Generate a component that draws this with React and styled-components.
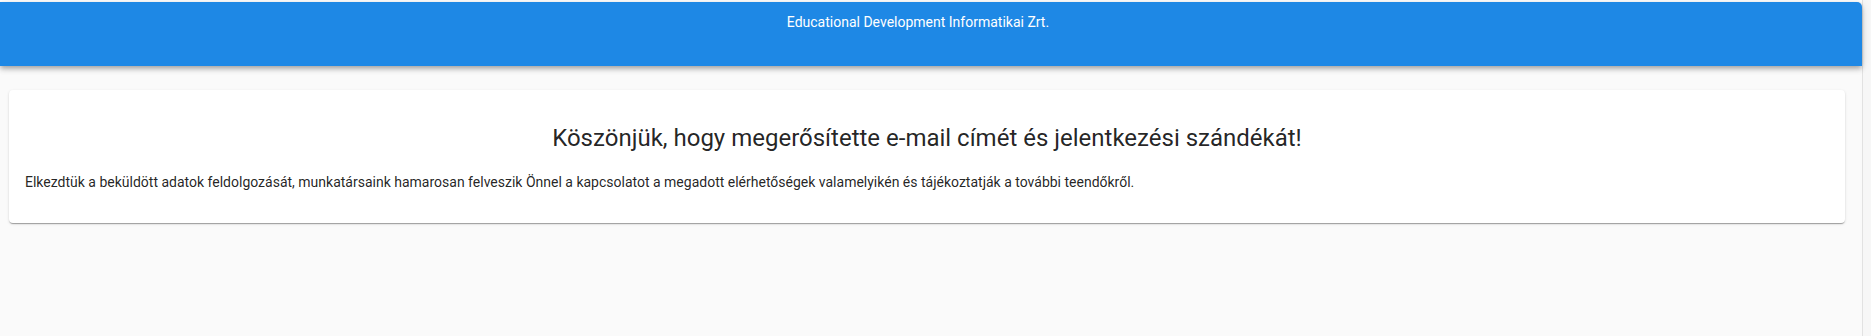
import styled, { createGlobalStyle } from "styled-components";

const GlobalStyle = createGlobalStyle`
    html, body {
        margin: 0;
        padding: 0;
        height: 100%;
        background: #fafafa;
        font-family: Roboto, "Liberation Sans", sans-serif;
        overflow: hidden;
    }
`;

const App = () => {
    return (
        <Page>
            <GlobalStyle />
            <Main>
                <Header>
                    <HeaderTitle>Educational Development Informatikai Zrt.</HeaderTitle>
                </Header>

                <Content>
                    <Card>
                        <Title>Köszönjük, hogy megerősítette e-mail címét és jelentkezési szándékát!</Title>
                        <Text>
                            Elkezdtük a beküldött adatok feldolgozását, munkatársaink hamarosan felveszik Önnel a kapcsolatot a megadott elérhetőségek valamelyikén és tájékoztatják a további teendőkről.
                        </Text>
                    </Card>
                </Content>
            </Main>
            <ScrollTrack />
        </Page>
    );
}

const Page = styled.div`
    display: flex;
    min-height: 100vh;
    background: #fafafa;
`;

const Main = styled.div`
    flex: 1;
    display: flex;
    flex-direction: column;
    padding-top: 2px;
    background: linear-gradient(#ffffff 0 2px, #fafafa 2px);
`;

const Header = styled.header`
    height: 64px;
    box-sizing: border-box;
    padding: 10px 26px 0 0;
    background: #1e88e5;
    border-top-right-radius: 5px;
    box-shadow: 0 2px 4px -1px rgba(0, 0, 0, 0.2), 0 4px 5px 0 rgba(0, 0, 0, 0.14), 0 1px 10px 0 rgba(0, 0, 0, 0.12);
    position: relative;
    z-index: 2;
    text-align: center;
`;

const HeaderTitle = styled.span`
    color: #ffffff;
    font-size: 14px;
    line-height: 20px;
`;

const Content = styled.div`
    padding: 24px 17px 0 9px;
`;

const Card = styled.div`
    background: #ffffff;
    border-radius: 4px;
    padding: 16px;
    box-shadow: 0 2px 1px -1px rgba(0, 0, 0, 0.2), 0 1px 1px 0 rgba(0, 0, 0, 0.14), 0 1px 3px 0 rgba(0, 0, 0, 0.12);
`;

const Title = styled.h2`
    margin: 16px 0 0;
    font-size: 24px;
    line-height: 32px;
    font-weight: 400;
    text-align: center;
    color: rgba(0, 0, 0, 0.87);
`;

const Text = styled.p`
    margin: 18px 0 15px;
    font-size: 14px;
    line-height: 20px;
    color: rgba(0, 0, 0, 0.87);
`;

const ScrollTrack = styled.div`
    width: 8px;
    flex-shrink: 0;
    background: #f7f7f7;
    border-left: 1px solid #e2e2e2;
`;

export default App;
